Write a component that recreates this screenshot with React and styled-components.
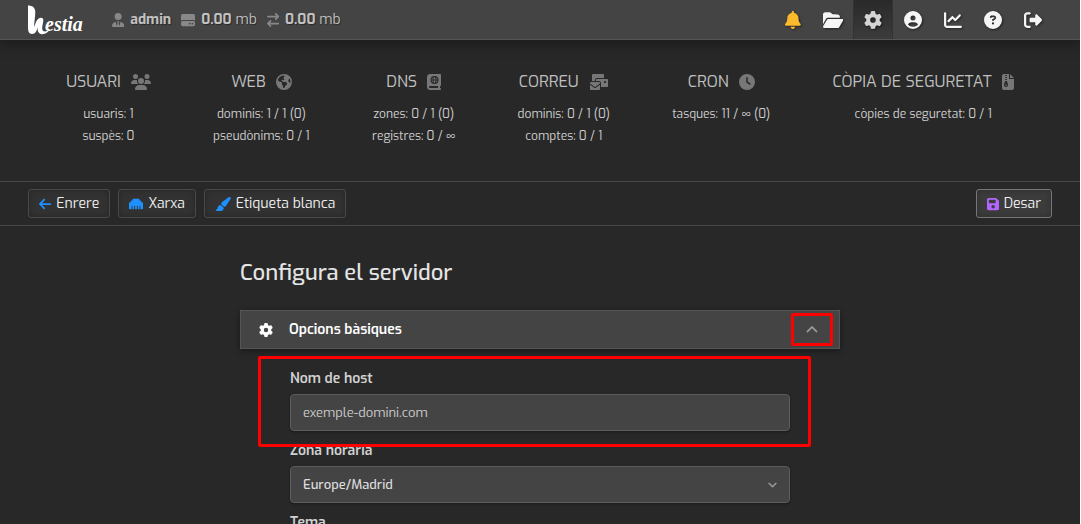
import React, { useState } from 'react';
import styled, { createGlobalStyle, css } from 'styled-components';
import {
    FaUserTie, FaHardDrive, FaArrowRightArrowLeft, FaBell, FaFolderOpen, FaGear,
    FaCircleUser, FaChartLine, FaCircleQuestion, FaRightFromBracket, FaUsers,
    FaEarthAmericas, FaBookAtlas, FaEnvelopesBulk, FaClock, FaFileZipper,
    FaArrowLeft, FaEthernet, FaPaintbrush, FaFloppyDisk, FaChevronUp, FaChevronDown,
} from 'react-icons/fa6';

const GlobalStyle = createGlobalStyle`
    * {
        box-sizing: border-box;
    }

    body {
        margin: 0;
        background: #282828;
        color: #d0d0d0;
        font-family: Exo, Roboto, sans-serif;
        font-size: 14px;
        line-height: 20px;
    }

    svg {
        flex: none;
    }

    /* react-icons squares every icon, give the wide and narrow ones their own width */
    svg[viewBox^='0 0 640'] {
        width: 1.25em;
    }

    svg[viewBox^='0 0 576'] {
        width: 1.125em;
    }

    svg[viewBox^='0 0 448'] {
        width: 0.875em;
    }

    svg[viewBox^='0 0 384'] {
        width: 0.75em;
    }
`;

const Page = styled.div`
    height: 100vh;
    overflow: hidden;
    border-right: 1px solid #fff;
`;

// Top bar
const TopBar = styled.header`
    display: flex;
    justify-content: space-between;
    height: 40px;
    padding: 0 27px 0 28px;
    background: #444;
    border-bottom: 1px solid #555;
    box-shadow: 0 4px 14px rgba(0, 0, 0, 0.35);
`;

const TopLeft = styled.div`
    display: flex;
    align-items: center;
    gap: 28px;
`;

const LogoLink = styled.a`
    display: flex;
`;

const Usage = styled.div`
    display: flex;
    align-items: center;
    gap: 10px;
    text-shadow: 1px 1px 1px rgba(0, 0, 0, 0.4);
`;

const UsageItem = styled.span`
    display: flex;
    align-items: center;
    gap: 6px;
    color: #c0c0c0;

    svg {
        color: #888;
    }
`;

const Nav = styled.nav`
    display: flex;
`;

const NavLink = styled.a`
    display: flex;
    align-items: center;
    justify-content: center;
    width: 40px;
    color: ${({ $color }) => $color || '#f5f5f5'};
    font-size: 18px;

    svg {
        filter: drop-shadow(1px 1px 1px rgba(0, 0, 0, 0.5));
    }

    ${({ $active }) => $active && css`
        background: linear-gradient(#292929, #3c3c3c);
        box-shadow: inset 1px 0 #333, inset -1px 0 #333;
        color: #d5d5d5;
    `}
`;

// Stats
const Stats = styled.section`
    display: flex;
    justify-content: space-around;
    padding: 32px 35px 34px;
`;

const Stat = styled.a`
    color: inherit;
    text-align: center;
    text-decoration: none;
`;

const StatTitle = styled.h2`
    display: flex;
    align-items: center;
    justify-content: center;
    gap: 10px;
    margin: 0 0 11px;
    font-size: 16px;
    font-weight: 400;
    line-height: 20px;
    color: #c0c0c0;

    svg {
        color: #777;
    }
`;

const StatLine = styled.p`
    margin: 0;
    font-size: 12px;
    line-height: 22px;
`;

// Toolbar
const Toolbar = styled.div`
    display: flex;
    justify-content: space-between;
    padding: 7px 28px;
    border-top: 1px solid #484848;
    border-bottom: 1px solid #484848;
`;

const ButtonGroup = styled.div`
    display: flex;
    gap: 8px;
`;

const ToolButton = styled.button`
    display: flex;
    align-items: center;
    gap: 5px;
    height: 29px;
    padding: 0 10px;
    background: ${({ $primary }) => ($primary ? '#3c3c3c' : '#323232')};
    border: 1px solid ${({ $primary }) => ($primary ? '#777' : '#484848')};
    border-radius: 3px;
    box-shadow: inset 0 0 6px rgba(0, 0, 0, 0.25);
    color: #eee;
    font-family: inherit;
    font-size: 14px;
    cursor: pointer;

    svg {
        color: ${({ $primary }) => ($primary ? '#b366ff' : '#1e90ff')};
    }
`;

// Form
const Form = styled.form`
    width: 100%;
    max-width: 600px;
    margin: 0 auto;
    padding-top: 32px;
`;

const Title = styled.h1`
    margin: 0 0 22px;
    font-size: 22px;
    font-weight: 500;
    line-height: 30px;
    color: #e4e4e4;
`;

const PanelHeader = styled.div`
    display: flex;
    align-items: center;
    height: 39px;
    padding: 0 6px 0 18px;
    background: #444;
    border: 1px solid #555;
    box-shadow: 0 2px 6px rgba(0, 0, 0, 0.4);
    color: #fff;
`;

const PanelTitle = styled.h3`
    flex: 1;
    margin: 0 0 0 16px;
    font-size: 14px;
    font-weight: 600;
`;

const ToggleButton = styled.button`
    display: flex;
    align-items: center;
    justify-content: center;
    width: 42px;
    height: 33px;
    padding: 0;
    background: none;
    border: 3px solid #f00;
    border-radius: 2px;
    color: #999;
    cursor: pointer;

    svg {
        stroke-width: 20px;
    }
`;

const PanelBody = styled.div`
    position: relative;
    padding: 20px 50px 0;
`;

const Highlight = styled.div`
    position: absolute;
    top: 7px;
    left: 18px;
    right: 29px;
    height: 91px;
    border: 3px solid #f00;
    border-radius: 2px;
    pointer-events: none;
`;

const Field = styled.div`
    margin-bottom: 10px;
`;

const Label = styled.label`
    display: block;
    margin-bottom: 5px;
    font-weight: 600;
`;

const control = css`
    display: block;
    width: 100%;
    height: 37px;
    padding: 0 12px;
    background: #444;
    border: 1px solid #5c5c5c;
    border-radius: 4px;
    box-shadow: 0 1px 3px rgba(0, 0, 0, 0.3);
    font-family: inherit;
    font-size: 13px;
    outline: none;
`;

const Input = styled.input`
    ${control}
    color: #ccc;
`;

const SelectWrapper = styled.div`
    position: relative;

    svg {
        position: absolute;
        top: 14px;
        right: 13px;
        color: #999;
        stroke-width: 30px;
        pointer-events: none;
    }
`;

const Select = styled.select`
    ${control}
    appearance: none;
    color: #ddd;
    font-weight: 500;
`;

const navItems = [
    { label: 'Notificacions', icon: FaBell, color: '#fbb92c' },
    { label: 'Fitxers', icon: FaFolderOpen },
    { label: 'Servidor', icon: FaGear, active: true },
    { label: 'Usuari', icon: FaCircleUser },
    { label: 'Estadístiques', icon: FaChartLine },
    { label: 'Ajuda', icon: FaCircleQuestion },
    { label: 'Sortir', icon: FaRightFromBracket },
];

const stats = [
    { title: 'USUARI', icon: FaUsers, lines: ['usuaris: 1', 'suspès: 0'] },
    { title: 'WEB', icon: FaEarthAmericas, lines: ['dominis: 1 / 1 (0)', 'pseudònims: 0 / 1'] },
    { title: 'DNS', icon: FaBookAtlas, lines: ['zones: 0 / 1 (0)', 'registres: 0 / ∞'] },
    { title: 'CORREU', icon: FaEnvelopesBulk, lines: ['dominis: 0 / 1 (0)', 'comptes: 0 / 1'] },
    { title: 'CRON', icon: FaClock, lines: ['tasques: 11 / ∞ (0)'] },
    { title: 'CÒPIA DE SEGURETAT', icon: FaFileZipper, lines: ['còpies de seguretat: 0 / 1'] },
];

const Logo = () => (
    <svg width="56" height="32" viewBox="0 0 56 32" role="img" aria-label="Hestia">
        <path
            d="M0 1.500C4 1.500 7.300 3.500 7.300 8C7.300 14 5.800 19 6.300 23.500C7.500 18 9.500 14 13 13.800C16 13.800 15.500 17 14.800 20C14 23.500 13.800 26.800 16 27.300C18 27.700 20 26.500 22 25C20 28.500 17 30.300 14 30.200C10.500 30 9 27 9.800 22.500C9 26.500 7.500 30 4 30C1 30 0 27 0 24Z"
            fill="#fff"
        />
        <text x="17" y="27" fill="#fff" fontFamily="'Liberation Serif', serif" fontSize="20" fontWeight="700" fontStyle="italic">estia</text>
    </svg>
);

const App = () => {
    const [open, setOpen] = useState(true);
    const [host, setHost] = useState('exemple-domini.com');

    return (
        <Page>
            <GlobalStyle />
            <TopBar>
                <TopLeft>
                    <LogoLink href="#"><Logo /></LogoLink>
                    <Usage>
                        <UsageItem><FaUserTie /><b>admin</b></UsageItem>
                        <UsageItem><FaHardDrive /><span><b>0.00</b> mb</span></UsageItem>
                        <UsageItem><FaArrowRightArrowLeft /><span><b>0.00</b> mb</span></UsageItem>
                    </Usage>
                </TopLeft>
                <Nav>
                    {navItems.map(({ label, icon: Icon, color, active }) => (
                        <NavLink key={label} href="#" aria-label={label} $color={color} $active={active}>
                            <Icon />
                        </NavLink>
                    ))}
                </Nav>
            </TopBar>

            <Stats>
                {stats.map(({ title, icon: Icon, lines }) => (
                    <Stat key={title} href="#">
                        <StatTitle>{title} <Icon /></StatTitle>
                        {lines.map(line => <StatLine key={line}>{line}</StatLine>)}
                    </Stat>
                ))}
            </Stats>

            <Toolbar>
                <ButtonGroup>
                    <ToolButton type="button"><FaArrowLeft />Enrere</ToolButton>
                    <ToolButton type="button"><FaEthernet />Xarxa</ToolButton>
                    <ToolButton type="button"><FaPaintbrush />Etiqueta blanca</ToolButton>
                </ButtonGroup>
                <ToolButton type="submit" form="server-form" $primary><FaFloppyDisk />Desar</ToolButton>
            </Toolbar>

            <Form id="server-form" onSubmit={(e) => e.preventDefault()}>
                <Title>Configura el servidor</Title>
                <PanelHeader>
                    <FaGear />
                    <PanelTitle>Opcions bàsiques</PanelTitle>
                    <ToggleButton type="button" aria-label="Opcions bàsiques" aria-expanded={open} onClick={() => setOpen(!open)}>
                        {open ? <FaChevronUp size={12} /> : <FaChevronDown size={12} />}
                    </ToggleButton>
                </PanelHeader>
                {open && (
                    <PanelBody>
                        <Highlight />
                        <Field>
                            <Label htmlFor="hostname">Nom de host</Label>
                            <Input id="hostname" type="text" value={host} onChange={(e) => setHost(e.target.value)} />
                        </Field>
                        <Field>
                            <Label htmlFor="timezone">Zona horària</Label>
                            <SelectWrapper>
                                <Select id="timezone" defaultValue="Europe/Madrid">
                                    <option>Europe/Madrid</option>
                                </Select>
                                <FaChevronDown size={9} />
                            </SelectWrapper>
                        </Field>
                        <Field>
                            <Label htmlFor="theme">Tema</Label>
                            <Select id="theme" />
                        </Field>
                    </PanelBody>
                )}
            </Form>
        </Page>
    );
};

export default App;
